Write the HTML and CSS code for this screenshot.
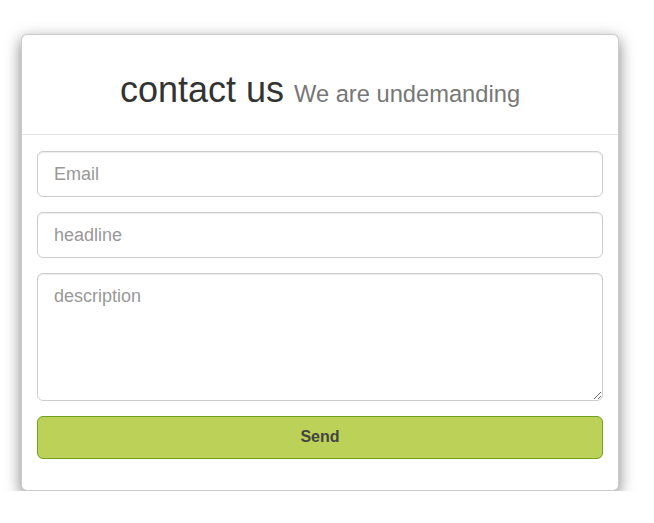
FILE: index.html
```html
<!DOCTYPE html>
<html>
<head>
<meta charset="utf-8">
<link rel="stylesheet" href="styles.css">
</head>
<body>
<div class="card">
  <div class="card-header">
    <h1 class="title">contact us <small class="subtitle">We are undemanding</small></h1>
  </div>
  <form class="card-body">
    <input class="field" type="text" placeholder="Email">
    <input class="field" type="text" placeholder="headline">
    <textarea class="field area" placeholder="description"></textarea>
    <button class="send" type="button">Send</button>
  </form>
</div>
</body>
</html>
```
FILE: styles.css
```css
* { box-sizing: border-box; }
html, body { margin: 0; padding: 0; background: #fff; }
body {
  font-family: "Liberation Sans", Arial, sans-serif;
  color: #333;
  padding: 34px 0 0 21px;
}
.card {
  width: 598px;
  background: #fff;
  border: 1px solid rgba(0,0,0,.2);
  border-radius: 6px;
  box-shadow: 0 5px 15px rgba(0,0,0,.5);
}
.card-header {
  padding: 15px;
  border-bottom: 1px solid #e5e5e5;
  text-align: center;
}
.title {
  margin: 20px 0 9px;
  font-size: 36px;
  font-weight: 400;
  line-height: 1.1;
  color: #333;
}
.subtitle {
  font-size: 23.7px;
  color: #777;
  font-weight: 400;
}
.card-body {
  padding: 16px 15px 31px;
  display: flex;
  flex-direction: column;
  gap: 15px;
}
.field {
  display: block;
  width: 100%;
  height: 46px;
  padding: 11px 16px 9px;
  font-family: "Liberation Sans", Arial, sans-serif;
  font-size: 18px;
  line-height: 1.33;
  color: #555;
  border: 1px solid #ccc;
  border-radius: 6px;
  background: #fff;
  box-shadow: inset 0 1px 1px rgba(0,0,0,.075);
  margin: 0;
}
.field::placeholder { color: #999; }
.area { height: 128px; resize: vertical; }
.send {
  display: block;
  width: 100%;
  height: 43px;
  margin: 0;
  font-family: "Liberation Sans", Arial, sans-serif;
  font-size: 16px;
  font-weight: 700;
  color: #444;
  background: #bcd157;
  border: 1px solid #74a020;
  border-radius: 6px;
}
```
